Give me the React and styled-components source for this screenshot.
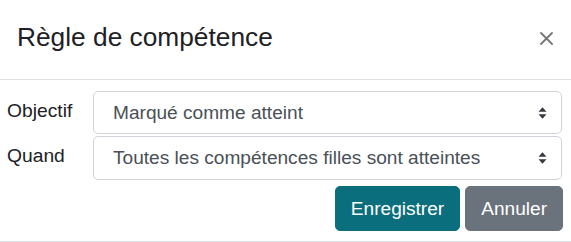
import React from "react";
import styled, { createGlobalStyle } from "styled-components";

const Global = createGlobalStyle`
  html, body { margin: 0; padding: 0; background: #fff; }
  body { font-family: "Liberation Sans", Arial, sans-serif; color: #1d2125; }
  * { box-sizing: border-box; }
`;

const Dialog = styled.div`
  width: 571px;
  display: flex;
  flex-direction: column;
`;

const Header = styled.div`
  height: 80px;
  display: flex;
  align-items: center;
  justify-content: space-between;
  padding: 0 18px 3px 17px;
  border-bottom: 1px solid #dee2e6;
`;

const Title = styled.h5`
  margin: 0;
  font-size: 26.3px;
  font-weight: 400;
  line-height: 1.2;
  color: #1d2125;
`;

const CloseButton = styled.button`
  border: 0;
  background: transparent;
  padding: 0;
  width: 14px;
  height: 14px;
  display: flex;
  align-items: center;
  justify-content: center;
  cursor: pointer;
`;

const Body = styled.div`
  padding: 11px 9px 10px 7px;
  border-bottom: 1px solid #dee2e6;
  display: flex;
  flex-direction: column;
`;

const FormRow = styled.div`
  display: grid;
  grid-template-columns: 86px 1fr;
  margin-bottom: ${(p) => p.$gap || 0}px;
`;

const Label = styled.label`
  font-size: 19.25px;
  line-height: 28px;
  padding-top: 6px;
  color: #1d2125;
`;

const SelectWrap = styled.div`
  position: relative;
`;

const Select = styled.select`
  appearance: none;
  -webkit-appearance: none;
  width: 100%;
  height: ${(p) => p.$h}px;
  border: 1px solid #ced4da;
  border-radius: 5px;
  background: #fff;
  padding: 0 36px 0 19px;
  font-family: "Liberation Sans", Arial, sans-serif;
  font-size: 19.1px;
  line-height: 28px;
  color: #495057;
  outline: none;
`;

const Arrow = styled.svg`
  position: absolute;
  right: 15px;
  top: 50%;
  transform: translateY(-50%);
  pointer-events: none;
`;

const Actions = styled.div`
  display: flex;
  justify-content: flex-end;
  gap: 5px;
  margin: 6px -1px 0 0;
`;

const Button = styled.button`
  height: 45px;
  border: 1px solid ${(p) => p.$bg};
  background: ${(p) => p.$bg};
  color: #fff;
  border-radius: 5px;
  padding: 0 15px;
  font-family: "Liberation Sans", Arial, sans-serif;
  font-size: 19.1px;
  line-height: 28px;
  cursor: pointer;
`;

function SelectField({ label, value, h, gap }) {
  return (
    <FormRow $gap={gap}>
      <Label>{label}</Label>
      <SelectWrap>
        <Select $h={h} defaultValue={value}>
          <option>{value}</option>
        </Select>
        <Arrow width="9" height="13" viewBox="0 0 9 13">
          <path d="M0.5 5.2 L4.5 0.8 L8.5 5.2 Z" fill="#343a40" />
          <path d="M0.5 7.8 L4.5 12.2 L8.5 7.8 Z" fill="#343a40" />
        </Arrow>
      </SelectWrap>
    </FormRow>
  );
}

export default function App() {
  return (
    <>
      <Global />
      <Dialog>
        <Header>
          <Title>Règle de compétence</Title>
          <CloseButton aria-label="Fermer">
            <svg width="13" height="13" viewBox="0 0 13 13">
              <path d="M1 1 L12 12 M12 1 L1 12" stroke="#767676" strokeWidth="1.8" strokeLinecap="round" />
            </svg>
          </CloseButton>
        </Header>
        <Body>
          <SelectField label="Objectif" value="Marqué comme atteint" h={43} gap={2} />
          <SelectField label="Quand" value="Toutes les compétences filles sont atteintes" h={44} />
          <Actions>
            <Button $bg="#0a6e7d">Enregistrer</Button>
            <Button $bg="#6a737b">Annuler</Button>
          </Actions>
        </Body>
      </Dialog>
    </>
  );
}
